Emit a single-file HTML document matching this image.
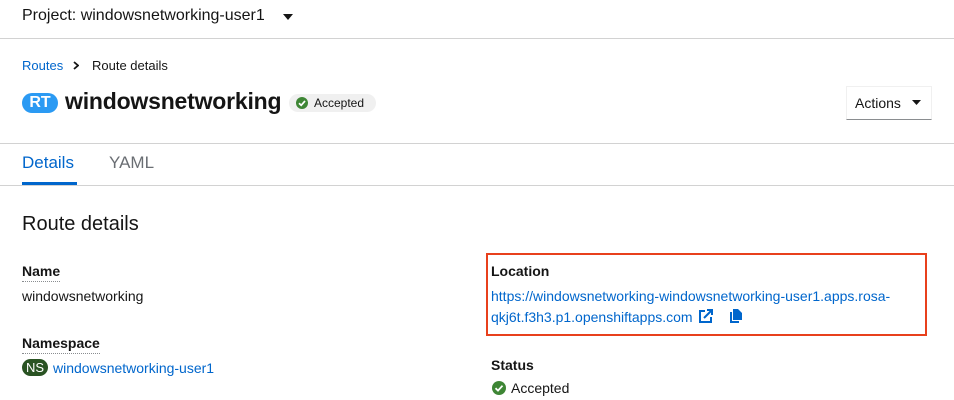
<!DOCTYPE html>
<html><head><style>
body{margin:0;width:954px;height:400px;background:#fff;font-family:"Liberation Sans",sans-serif;color:#151515;position:relative;overflow:hidden}
.a{position:absolute;white-space:nowrap}
.l{color:#0066cc}
.hr{position:absolute;left:0;width:954px;height:1px;background:#d2d2d2}
.lbl{font-weight:bold;font-size:14px}
.dot{border-bottom:1px dotted #8a8d90;padding-bottom:2px}
</style></head><body>
<div class="a" style="left:22px;top:7px;font-size:16px">Project: windowsnetworking-user1</div>
<svg class="a" style="left:283px;top:14px" width="10" height="6"><path d="M0 0H10L5 6Z" fill="#151515"/></svg>
<div class="hr" style="top:38px"></div>
<div class="a" style="left:22px;top:58px;font-size:13px"><span class="l">Routes</span></div>
<svg class="a" style="left:73px;top:61px" width="6" height="9"><path d="M1 1L5 4.5L1 8" stroke="#151515" stroke-width="1.8" fill="none"/></svg>
<div class="a" style="left:92px;top:58px;font-size:13px">Route details</div>
<div class="a" style="left:22px;top:93px;width:36px;height:20px;border-radius:10px;background:#2b9af3;color:#fff;font-size:16px;font-weight:bold;text-align:center;line-height:20px">RT</div>
<div class="a" style="left:65px;top:88px;font-size:23px;font-weight:bold;letter-spacing:-0.2px">windowsnetworking</div>
<div class="a" style="left:289px;top:94px;width:87px;height:18px;border-radius:9px;background:#f0f0f0;font-size:12px;line-height:18px">
<svg style="position:absolute;left:7px;top:3px" width="12" height="12"><circle cx="6" cy="6" r="6" fill="#3e8635"/><path d="M3 6.2L5.2 8.3L9 4" stroke="#fff" stroke-width="1.7" fill="none"/></svg>
<span style="position:absolute;left:25px">Accepted</span></div>
<div class="a" style="left:846px;top:86px;width:84px;height:32px;border:1px solid #f0f0f0;border-bottom:1px solid #8a8d90;font-size:14px;line-height:32px"><span style="position:absolute;left:8px">Actions</span>
<svg style="position:absolute;left:65px;top:13px" width="9" height="6"><path d="M0 0H9L4.5 5Z" fill="#151515"/></svg></div>
<div class="hr" style="top:143px"></div>
<div class="a l" style="left:22px;top:153px;font-size:17px">Details</div>
<div class="a" style="left:109px;top:153px;font-size:17px;color:#6a6e73">YAML</div>
<div class="hr" style="top:185px"></div>
<div class="a" style="left:22px;top:182px;width:55px;height:3px;background:#0066cc"></div>
<div class="a" style="left:22px;top:213px;font-size:20px">Route details</div>
<div class="a lbl" style="left:22px;top:263px"><span class="dot">Name</span></div>
<div class="a" style="left:22px;top:288px;font-size:14px">windowsnetworking</div>
<div class="a lbl" style="left:22px;top:335px"><span class="dot">Namespace</span></div>
<div class="a" style="left:22px;top:359px;width:26px;height:17px;border-radius:9px;background:#2a5323;color:#fff;font-size:13px;text-align:center;line-height:17px">NS</div>
<div class="a l" style="left:53px;top:360px;font-size:14px">windowsnetworking-user1</div>
<div class="a" style="left:486px;top:253px;width:437px;height:79px;border:2px solid #e8401c"></div>
<div class="a lbl" style="left:491px;top:263px">Location</div>
<div class="a l" style="left:491px;top:288px;font-size:14px">https://windowsnetworking-windowsnetworking-user1.apps.rosa-</div>
<div class="a l" style="left:491px;top:309px;font-size:14px">qkj6t.f3h3.p1.openshiftapps.com</div>
<svg class="a" style="left:699px;top:309px" width="14" height="14"><path d="M6 2H1V13H12V8" stroke="#0066cc" stroke-width="2" fill="none"/><path d="M5 9L12 2M8 1H13V6" stroke="#0066cc" stroke-width="2" fill="none"/></svg>
<svg class="a" style="left:729px;top:309px" width="14" height="14"><path d="M4 0H9L13 4V11H4Z" fill="#0066cc"/><path d="M1 3H3V12H10V14H1Z" fill="#0066cc"/></svg>
<div class="a lbl" style="left:491px;top:357px">Status</div>
<svg class="a" style="left:492px;top:381px" width="14" height="14"><circle cx="7" cy="7" r="7" fill="#3e8635"/><path d="M3.5 7.2L6 9.6L10.5 4.7" stroke="#fff" stroke-width="1.8" fill="none"/></svg>
<div class="a" style="left:511px;top:380px;font-size:14px">Accepted</div>
</body></html>
